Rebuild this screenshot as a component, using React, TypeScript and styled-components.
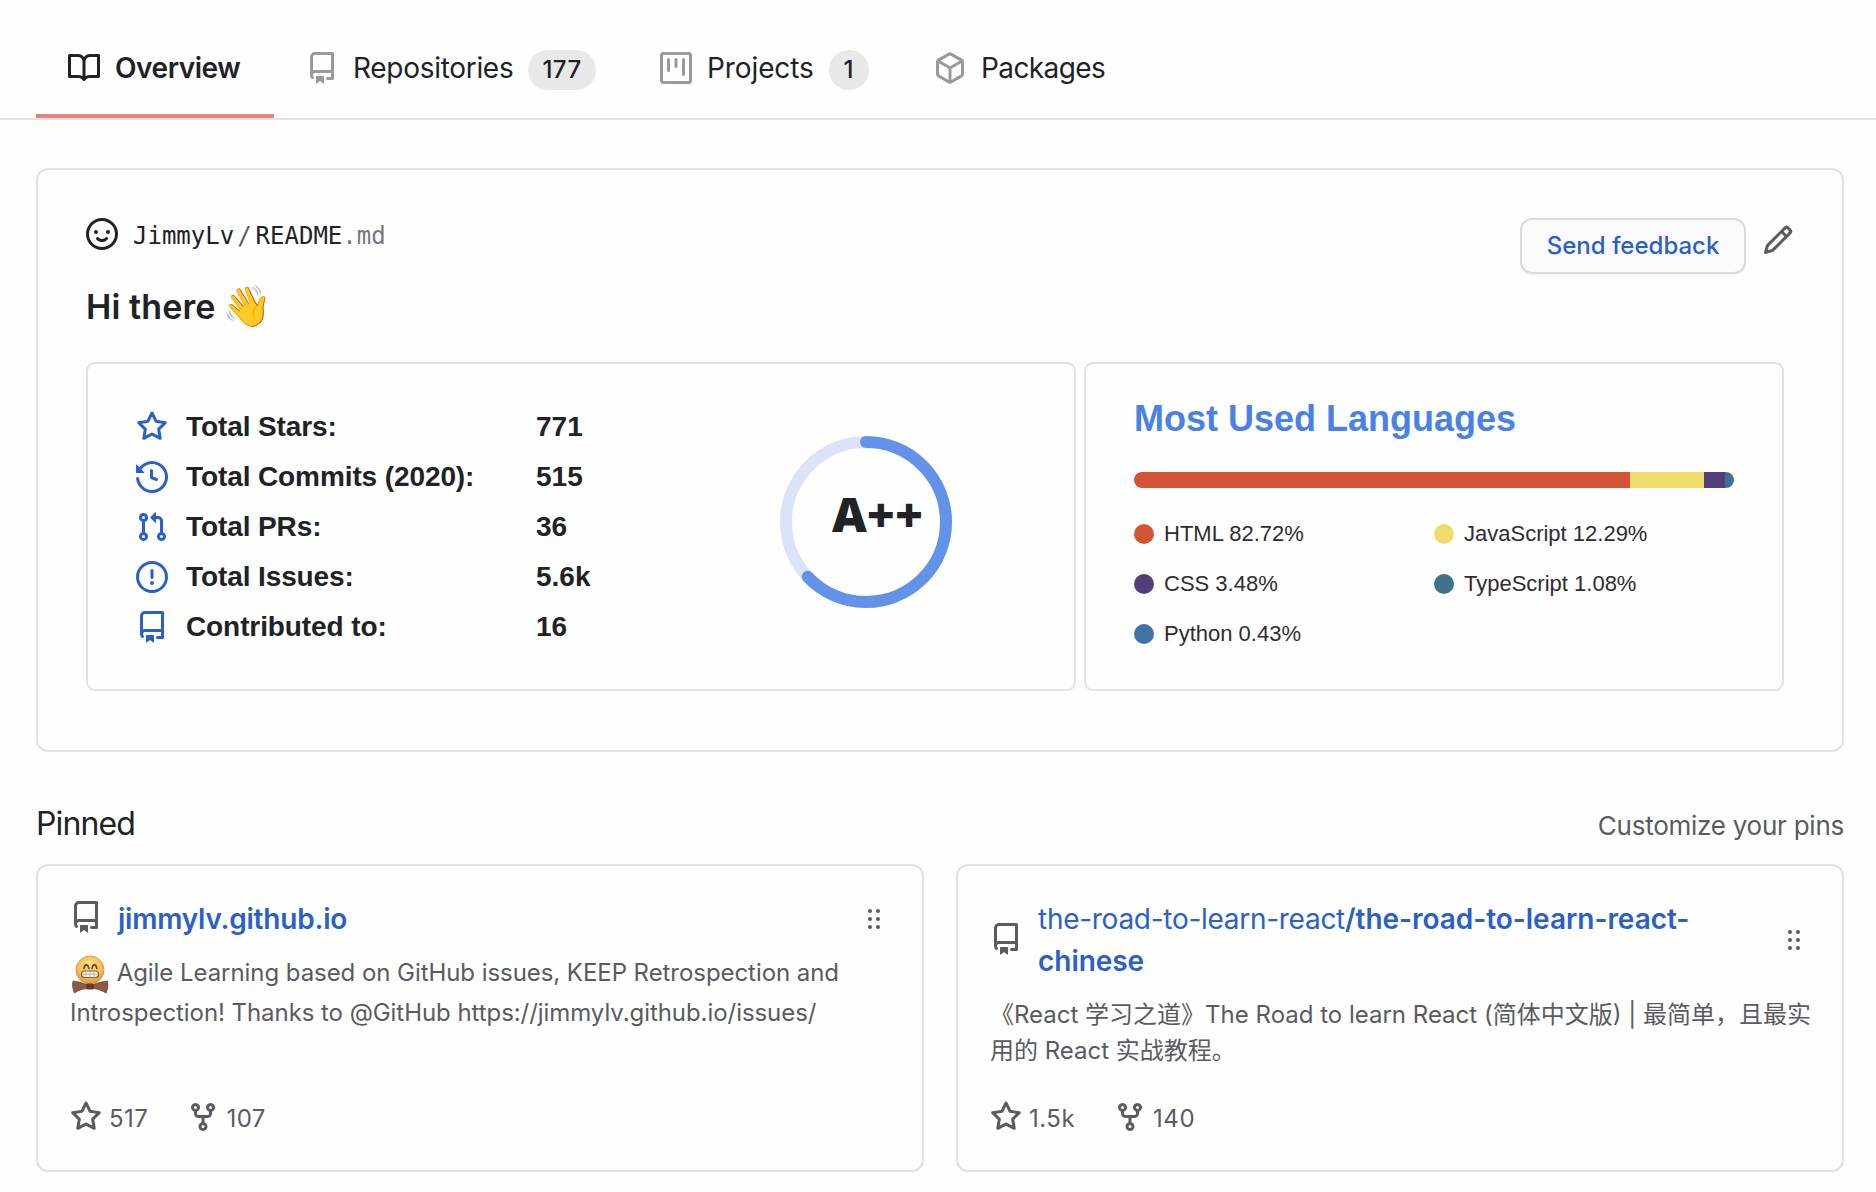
import React from "react";
import styled, { createGlobalStyle } from "styled-components";

const color = {
  page: "#fefefe",
  ink: "#212226",
  muted: "#595b60",
  faint: "#97999e",
  line: "#e2e2e4",
  link: "#2b5fc9",
  accent: "#e4857a",
};

const sans = `Inter, "Noto Sans CJK SC", sans-serif`;
const helvetica = `"Liberation Sans", Arial, sans-serif`;

const GlobalStyle = createGlobalStyle`
  * { box-sizing: border-box; }
  body {
    margin: 0;
    background: ${color.page};
    color: ${color.ink};
    font-family: ${sans};
    -webkit-font-smoothing: antialiased;
  }
  h2, h3, h4, p { margin: 0; font-weight: inherit; }
  a { color: inherit; text-decoration: none; }
`;

/* ---------- icons ---------- */

const icons = {
  book: "M0 1.75A.75.75 0 01.75 1h4.253c1.227 0 2.317.59 3 1.501A3.744 3.744 0 0111.006 1h4.245a.75.75 0 01.75.75v10.5a.75.75 0 01-.75.75h-4.507a2.25 2.25 0 00-1.591.659l-.622.621a.75.75 0 01-1.06 0l-.622-.621A2.25 2.25 0 005.258 13H.75a.75.75 0 01-.75-.75V1.75zm8.755 3a2.25 2.25 0 012.25-2.25H14.5v9h-3.757c-.71 0-1.4.201-1.992.572l.004-7.322zm-1.504 7.324l.004-5.073-.002-2.253A2.25 2.25 0 005.003 2.5H1.5v9h3.757a3.75 3.75 0 011.994.574z",
  repo: "M2 2.5A2.5 2.5 0 014.5 0h8.75a.75.75 0 01.75.75v12.5a.75.75 0 01-.75.75h-2.5a.75.75 0 110-1.5h1.75v-2h-8a1 1 0 00-.714 1.7.75.75 0 01-1.072 1.05A2.495 2.495 0 012 11.5v-9zm10.5-1V9h-8c-.356 0-.694.074-1 .208V2.5a1 1 0 011-1h8zM5 12.25v3.25a.25.25 0 00.4.2l1.45-1.087a.25.25 0 01.3 0L8.6 15.7a.25.25 0 00.4-.2v-3.25a.25.25 0 00-.25-.25h-3.5a.25.25 0 00-.25.25z",
  project: "M1.75 0A1.75 1.75 0 000 1.75v12.5C0 15.216.784 16 1.75 16h12.5A1.75 1.75 0 0016 14.25V1.75A1.75 1.75 0 0014.25 0H1.75zM1.5 1.75a.25.25 0 01.25-.25h12.5a.25.25 0 01.25.25v12.5a.25.25 0 01-.25.25H1.75a.25.25 0 01-.25-.25V1.75zM11.75 3a.75.75 0 00-.75.75v7.5a.75.75 0 001.5 0v-7.5a.75.75 0 00-.75-.75zm-8.25.75a.75.75 0 011.5 0v5.5a.75.75 0 01-1.5 0v-5.5zM8 3a.75.75 0 00-.75.75v3.5a.75.75 0 001.5 0v-3.5A.75.75 0 008 3z",
  package: "M8.878.392a1.75 1.75 0 00-1.756 0l-5.25 3.045A1.75 1.75 0 001 4.951v6.098c0 .624.332 1.2.872 1.514l5.25 3.045a1.75 1.75 0 001.756 0l5.25-3.045c.54-.313.872-.89.872-1.514V4.951c0-.624-.332-1.2-.872-1.514L8.878.392zM7.875 1.69a.25.25 0 01.25 0l4.63 2.685L8 7.133 3.245 4.375l4.63-2.685zM2.5 5.677v5.372c0 .09.047.171.125.216l4.625 2.683V8.432L2.5 5.677zm6.25 8.271l4.625-2.683a.25.25 0 00.125-.216V5.677L8.75 8.432v5.516z",
  star: "M8 .25a.75.75 0 01.673.418l1.882 3.815 4.21.612a.75.75 0 01.416 1.279l-3.046 2.97.719 4.192a.75.75 0 01-1.088.791L8 12.347l-3.766 1.98a.75.75 0 01-1.088-.79l.72-4.194L.818 6.374a.75.75 0 01.416-1.28l4.21-.611L7.327.668A.75.75 0 018 .25zm0 2.445L6.615 5.5a.75.75 0 01-.564.41l-3.097.45 2.24 2.184a.75.75 0 01.216.664l-.528 3.084 2.769-1.456a.75.75 0 01.698 0l2.77 1.456-.53-3.084a.75.75 0 01.216-.664l2.24-2.183-3.096-.45a.75.75 0 01-.564-.41L8 2.694v.001z",
  history: "M1.643 3.143L.427 1.927A.25.25 0 000 2.104V5.75c0 .138.112.25.25.25h3.646a.25.25 0 00.177-.427L2.715 4.215a6.5 6.5 0 11-1.18 4.458.75.75 0 10-1.493.154 8.001 8.001 0 101.6-5.684zM7.75 4a.75.75 0 01.75.75v2.992l2.028.812a.75.75 0 01-.557 1.392l-2.5-1A.75.75 0 017 8.25v-3.5A.75.75 0 017.75 4z",
  pull: "M7.177 3.073L9.573.677A.25.25 0 0110 .854v4.792a.25.25 0 01-.427.177L7.177 3.427a.25.25 0 010-.354zM3.75 2.5a.75.75 0 100 1.5.75.75 0 000-1.5zm-2.25.75a2.25 2.25 0 113 2.122v5.256a2.251 2.251 0 11-1.5 0V5.372A2.25 2.25 0 011.5 3.25zM11 2.5h-1V4h1a1 1 0 011 1v5.628a2.251 2.251 0 101.5 0V5A2.5 2.5 0 0011 2.5zm1 10.25a.75.75 0 111.5 0 .75.75 0 01-1.5 0zM3.75 12a.75.75 0 100 1.5.75.75 0 000-1.5z",
  issue: "M8 1.5a6.5 6.5 0 100 13 6.5 6.5 0 000-13zM0 8a8 8 0 1116 0A8 8 0 010 8zm9 3a1 1 0 11-2 0 1 1 0 012 0zm-.25-6.25a.75.75 0 00-1.5 0v3.5a.75.75 0 001.5 0v-3.5z",
  fork: "M5 3.25a.75.75 0 11-1.5 0 .75.75 0 011.5 0zm0 2.122a2.25 2.25 0 10-1.5 0v.878A2.25 2.25 0 005.75 8.5h1.5v2.128a2.251 2.251 0 101.5 0V8.5h1.5a2.25 2.25 0 002.25-2.25v-.878a2.25 2.25 0 10-1.5 0v.878a.75.75 0 01-.75.75h-4.5A.75.75 0 015 6.25v-.878zm3.75 7.378a.75.75 0 11-1.5 0 .75.75 0 011.5 0zm3-8.75a.75.75 0 100-1.5.75.75 0 000 1.5z",
  smiley: "M1.5 8a6.5 6.5 0 1113 0 6.5 6.5 0 01-13 0zM8 0a8 8 0 100 16A8 8 0 008 0zM5 8a1 1 0 100-2 1 1 0 000 2zm7-1a1 1 0 11-2 0 1 1 0 012 0zM5.32 9.636a.75.75 0 011.038.175l.007.009c.103.118.22.222.35.31.264.178.683.37 1.285.37.602 0 1.02-.192 1.285-.371.13-.088.247-.192.35-.31l.007-.008a.75.75 0 111.222.87l-.022.03a1.984 1.984 0 01-.184.213c-.16.166-.338.316-.53.445-.63.418-1.37.638-2.127.629-.946 0-1.652-.308-2.126-.63a3.32 3.32 0 01-.715-.657l-.022-.03a.75.75 0 01.183-1.045z",
  pencil: "M11.013 1.427a1.75 1.75 0 012.474 0l1.086 1.086a1.75 1.75 0 010 2.474l-8.61 8.61c-.21.21-.47.364-.756.445l-3.251.93a.75.75 0 01-.927-.928l.929-3.25a1.75 1.75 0 01.445-.758l8.61-8.61zm1.414 1.06a.25.25 0 00-.354 0L10.811 3.75l1.439 1.44 1.263-1.263a.25.25 0 000-.354l-1.086-1.086zM11.189 6.25L9.75 4.81l-6.286 6.287a.25.25 0 00-.064.108l-.558 1.953 1.953-.558a.249.249 0 00.108-.064l6.286-6.286z",
};
type IconName = keyof typeof icons;

const IconSvg = styled.svg<{ $tint?: string }>`
  flex: none;
  display: block;
  width: 32px;
  height: 32px;
  fill: ${(p) => p.$tint ?? "currentColor"};
`;

const Icon = ({ name, tint }: { name: IconName; tint?: string }) => (
  <IconSvg viewBox="0 0 16 16" $tint={tint} aria-hidden="true">
    <path fillRule="evenodd" d={icons[name]} />
  </IconSvg>
);

/* ---------- tab bar ---------- */

const TabBar = styled.nav`
  display: flex;
  align-items: flex-end;
  height: 120px;
  padding-left: 36px;
  border-bottom: 2px solid ${color.line};
`;

const Tab = styled.a<{ $width: number; $selected?: boolean; $tracking: number }>`
  display: flex;
  align-items: center;
  width: ${(p) => p.$width}px;
  height: 100px;
  padding-left: 32px;
  border-top: 4px solid transparent;
  border-bottom: 4px solid ${(p) => (p.$selected ? color.accent : "transparent")};
  font-size: 28px;
  font-weight: ${(p) => (p.$selected ? 600 : 400)};
  letter-spacing: ${(p) => p.$tracking}px;
  white-space: nowrap;
`;

const TabLabel = styled.span`
  margin-left: 15px;
`;

const Counter = styled.span`
  display: flex;
  align-items: center;
  justify-content: center;
  min-width: 40px;
  height: 40px;
  margin: 3px 0 0 15px;
  padding: 0 14px;
  border-radius: 20px;
  background: #e8e8e9;
  font-size: 24px;
  font-weight: 500;
  letter-spacing: 0.5px;
`;

const tabs: { icon: IconName; label: string; count?: string; width: number; tracking: number }[] = [
  { icon: "book", label: "Overview", width: 238, tracking: -0.45 },
  { icon: "repo", label: "Repositories", count: "177", width: 354, tracking: -0.3 },
  { icon: "project", label: "Projects", count: "1", width: 274, tracking: -0.1 },
  { icon: "package", label: "Packages", width: 260, tracking: -0.6 },
];

/* ---------- readme card ---------- */

const Main = styled.main`
  padding: 48px 32px 0 36px;
`;

const Card = styled.section`
  border: 2px solid ${color.line};
  border-radius: 12px;
`;

const ReadmeCard = styled(Card)`
  height: 584px;
  padding: 48px;
`;

const ReadmeHeader = styled.header`
  display: flex;
  align-items: flex-start;
  height: 56px;
`;

const FilePath = styled.div`
  flex: 1;
  margin-left: 15px;
  font: 24px/36px "DejaVu Sans Mono", monospace;
`;

const Slash = styled.span`
  margin: 0 4px 0 3px;
  color: ${color.muted};
`;

const Extension = styled.span`
  color: #77797e;
`;

const FeedbackButton = styled.button`
  width: 226px;
  height: 56px;
  margin-right: 16px;
  padding: 0;
  border: 2px solid #dadadc;
  border-radius: 12px;
  background: #fafafb;
  box-shadow: 0 2px 0 rgba(27, 31, 35, 0.03);
  color: ${color.link};
  font: 500 24px/32px ${sans};
`;

const EditLink = styled.a`
  margin-top: 6px;
  color: ${color.muted};
`;

const Greeting = styled.h3`
  display: flex;
  align-items: center;
  height: 42px;
  margin: 12px 0 34px;
  font-size: 34px;
  font-weight: 600;
  line-height: 42px;
  letter-spacing: 0.1px;
`;

const Wave = styled.span`
  margin-left: 7px;
  font: 40px/42px "Noto Color Emoji", ${sans};
`;

const Widgets = styled.div`
  display: flex;
  gap: 8px;
`;

const Widget = styled.div<{ $width: number }>`
  width: ${(p) => p.$width}px;
  height: 329px;
  border: 2px solid ${color.line};
  border-radius: 9px;
  font-family: ${helvetica};
`;

const StatsWidget = styled(Widget)`
  display: flex;
  align-items: flex-start;
  padding: 38px 48px 0;
`;

const StatList = styled.div`
  width: 644px;
`;

const StatRow = styled.div`
  display: flex;
  align-items: center;
  height: 50px;
  font-size: 28px;
  font-weight: 700;
`;

const StatLabel = styled.span`
  width: 350px;
  margin-left: 18px;
  letter-spacing: -0.1px;
`;

const RankRing = styled.div`
  position: relative;
  width: 172px;
  height: 172px;
  margin-top: 34px;
`;

const RankText = styled.span`
  position: absolute;
  top: 46px;
  left: 52px;
  font: 800 48px/64px "Open Sans", sans-serif;
`;

const LanguagesWidget = styled(Widget)`
  padding: 35px 48px 0;
`;

const LanguagesTitle = styled.h4`
  margin-bottom: 33px;
  color: #4a81e6;
  font-size: 36px;
  font-weight: 700;
  line-height: 40px;
`;

const LanguageBar = styled.div`
  display: flex;
  width: 600px;
  height: 16px;
  overflow: hidden;
  border-radius: 9px;
`;

const Segment = styled.span<{ $tint: string }>`
  background: ${(p) => p.$tint};
`;

const Legend = styled.div`
  display: grid;
  grid-template-columns: 300px 300px;
  grid-auto-rows: 50px;
  align-items: center;
  margin-top: 21px;
  color: #2d2d2f;
  font-size: 22px;
`;

const LegendItem = styled.div`
  display: flex;
  align-items: center;
  gap: 10px;
`;

const Dot = styled.span<{ $tint: string }>`
  width: 20px;
  height: 20px;
  border-radius: 50%;
  background: ${(p) => p.$tint};
`;

const stats: { icon: IconName; label: string; value: string }[] = [
  { icon: "star", label: "Total Stars:", value: "771" },
  { icon: "history", label: "Total Commits (2020):", value: "515" },
  { icon: "pull", label: "Total PRs:", value: "36" },
  { icon: "issue", label: "Total Issues:", value: "5.6k" },
  { icon: "repo", label: "Contributed to:", value: "16" },
];

const languages = [
  { name: "HTML", share: 82.72, tint: "#d35334" },
  { name: "JavaScript", share: 12.29, tint: "#eedd6b" },
  { name: "CSS", share: 3.48, tint: "#533e79" },
  { name: "TypeScript", share: 1.08, tint: "#40728a" },
  { name: "Python", share: 0.43, tint: "#4272a5" },
];

const Ring = () => {
  const circumference = 2 * Math.PI * 80;
  return (
    <svg width="172" height="172" viewBox="0 0 172 172" fill="none" strokeWidth="12">
      <circle cx="86" cy="86" r="80" stroke="#dae3f8" />
      <circle
        cx="86"
        cy="86"
        r="80"
        stroke="#6293e8"
        strokeLinecap="round"
        strokeDasharray={`${(circumference * 226.4) / 360} ${circumference}`}
        transform="rotate(-90 86 86)"
      />
    </svg>
  );
};

/* ---------- pinned repositories ---------- */

const PinnedHeader = styled.div`
  display: flex;
  align-items: baseline;
  justify-content: space-between;
  height: 41px;
  margin: 51px 0 20px;
`;

const PinnedTitle = styled.h2`
  font-size: 32px;
  line-height: 41px;
  letter-spacing: -0.9px;
`;

const CustomizeLink = styled.a`
  color: ${color.muted};
  font-size: 26px;
  letter-spacing: -0.25px;
`;

const PinnedGrid = styled.div`
  display: grid;
  grid-template-columns: 888px 888px;
  gap: 32px;
`;

const PinnedCard = styled(Card)`
  display: flex;
  flex-direction: column;
  height: 308px;
  padding: 32px 32px 37px;
  color: ${color.muted};
`;

const RepoHeading = styled.div<{ $single?: boolean }>`
  display: flex;
  align-items: center;

  ${IconSvg} {
    margin-top: ${(p) => (p.$single ? -4 : -2)}px;
  }
`;

const RepoLink = styled.a`
  flex: 1;
  margin-left: 16px;
  color: ${color.link};
  font-size: 28px;
  line-height: 42px;
  letter-spacing: -0.28px;
`;

const RepoName = styled.span<{ $tracking: number }>`
  font-weight: 600;
  letter-spacing: ${(p) => p.$tracking}px;
`;

const GripSvg = styled.svg`
  flex: none;
  margin-right: 10px;
  fill: currentColor;
`;

const Grip = () => (
  <GripSvg width="12" height="20" viewBox="0 0 12 20">
    {[2, 10, 18].map((y) => (
      <React.Fragment key={y}>
        <circle cx="2" cy={y} r="2" />
        <circle cx="10" cy={y} r="2" />
      </React.Fragment>
    ))}
  </GripSvg>
);

const Description = styled.p<{ $leading: number; $gap: number; $tracking: number }>`
  flex: 1;
  margin: ${(p) => p.$gap}px -6px 0 0;
  font-size: 24px;
  line-height: ${(p) => p.$leading}px;
  letter-spacing: ${(p) => p.$tracking}px;
`;

const BowtieSvg = styled.svg`
  margin: -4px 0 -6px;
  vertical-align: -8px;
`;

const Bowtie = () => (
  <BowtieSvg width="40" height="40" viewBox="0 0 40 40">
    <defs>
      <radialGradient id="face" cx="50%" cy="35%" r="65%">
        <stop offset="0" stopColor="#fce08a" />
        <stop offset="0.6" stopColor="#f5c25a" />
        <stop offset="1" stopColor="#dc943a" />
      </radialGradient>
    </defs>
    <circle cx="20" cy="15" r="14" fill="url(#face)" stroke="#dfa04a" />
    <path
      d="M14 13.5c.4-2.6 1.4-3.6 2.4-3.6s2 1 2.4 3.6M22 13.5c.4-2.6 1.4-3.6 2.4-3.6s2 1 2.4 3.6"
      fill="none"
      stroke="#5c4322"
      strokeWidth="1.6"
      strokeLinecap="round"
    />
    <rect x="11.5" y="16" width="17" height="6.5" rx="3" fill="#fbf7ea" stroke="#806034" strokeWidth="1.2" />
    <path d="M12 19.2h16M16 16v6.5M20 16v6.5M24 16v6.5" stroke="#a99c80" strokeWidth="0.7" />
    <path
      d="M3 26c5 .6 9 1.8 13.5 3.6h7C28 27.8 32 26.6 37.5 26c.6 4 .4 8-1.500 12-4-2.600-8-4-12.500-4.500h-7C12 34 8 35.400 4.500 38 2.600 34 2.300 30 3 26z"
      fill="#8d5a45"
      stroke="#6f4232"
      strokeWidth="0.8"
    />
    <rect x="16" y="28.5" width="8" height="6" rx="1.5" fill="#6a3d2f" />
  </BowtieSvg>
);

const Meta = styled.footer`
  display: flex;
  gap: 39px;
  height: 32px;
`;

const MetaItem = styled.span`
  display: flex;
  gap: 7px;
  font-size: 24px;
  line-height: 36px;
  letter-spacing: 0.5px;
`;

const MetaCounts = ({ stars, forks }: { stars: string; forks: string }) => (
  <Meta>
    <MetaItem>
      <Icon name="star" />
      {stars}
    </MetaItem>
    <MetaItem>
      <Icon name="fork" />
      {forks}
    </MetaItem>
  </Meta>
);

export default function App() {
  return (
    <>
      <GlobalStyle />
      <TabBar>
        {tabs.map((tab, i) => (
          <Tab key={tab.label} $width={tab.width} $selected={i === 0} $tracking={tab.tracking}>
            <Icon name={tab.icon} tint={i === 0 ? color.ink : color.faint} />
            <TabLabel>{tab.label}</TabLabel>
            {tab.count && <Counter>{tab.count}</Counter>}
          </Tab>
        ))}
      </TabBar>

      <Main>
        <ReadmeCard>
          <ReadmeHeader>
            <Icon name="smiley" />
            <FilePath>
              JimmyLv<Slash>/</Slash>README<Extension>.md</Extension>
            </FilePath>
            <FeedbackButton>Send feedback</FeedbackButton>
            <EditLink>
              <Icon name="pencil" />
            </EditLink>
          </ReadmeHeader>

          <Greeting>
            Hi there<Wave>👋</Wave>
          </Greeting>

          <Widgets>
            <StatsWidget $width={990}>
              <StatList>
                {stats.map((stat) => (
                  <StatRow key={stat.label}>
                    <Icon name={stat.icon} tint={color.link} />
                    <StatLabel>{stat.label}</StatLabel>
                    {stat.value}
                  </StatRow>
                ))}
              </StatList>
              <RankRing>
                <Ring />
                <RankText>A++</RankText>
              </RankRing>
            </StatsWidget>

            <LanguagesWidget $width={700}>
              <LanguagesTitle>Most Used Languages</LanguagesTitle>
              <LanguageBar>
                {languages.map((lang) => (
                  <Segment key={lang.name} $tint={lang.tint} style={{ width: `${lang.share}%` }} />
                ))}
              </LanguageBar>
              <Legend>
                {languages.map((lang) => (
                  <LegendItem key={lang.name}>
                    <Dot $tint={lang.tint} />
                    {`${lang.name} ${lang.share}%`}
                  </LegendItem>
                ))}
              </Legend>
            </LanguagesWidget>
          </Widgets>
        </ReadmeCard>

        <PinnedHeader>
          <PinnedTitle>Pinned</PinnedTitle>
          <CustomizeLink>Customize your pins</CustomizeLink>
        </PinnedHeader>

        <PinnedGrid>
          <PinnedCard>
            <RepoHeading $single>
              <Icon name="repo" />
              <RepoLink>
                <RepoName $tracking={-0.22}>jimmylv.github.io</RepoName>
              </RepoLink>
              <Grip />
            </RepoHeading>
            <Description $leading={40} $gap={13} $tracking={-0.06}>
              <Bowtie /> Agile Learning based on GitHub issues, KEEP Retrospection and Introspection! Thanks
              to @GitHub https://jimmylv.github.io/issues/
            </Description>
            <MetaCounts stars="517" forks="107" />
          </PinnedCard>

          <PinnedCard>
            <RepoHeading>
              <Icon name="repo" />
              <RepoLink>
                the-road-to-learn-react<RepoName $tracking={-0.04}>/the-road-to-learn-react-chinese</RepoName>
              </RepoLink>
              <Grip />
            </RepoHeading>
            <Description $leading={36} $gap={15} $tracking={0}>
              《React 学习之道》The Road to learn React (简体中文版) | 最简单，且最实用的 React 实战教程。
            </Description>
            <MetaCounts stars="1.5k" forks="140" />
          </PinnedCard>
        </PinnedGrid>
      </Main>
    </>
  );
}
